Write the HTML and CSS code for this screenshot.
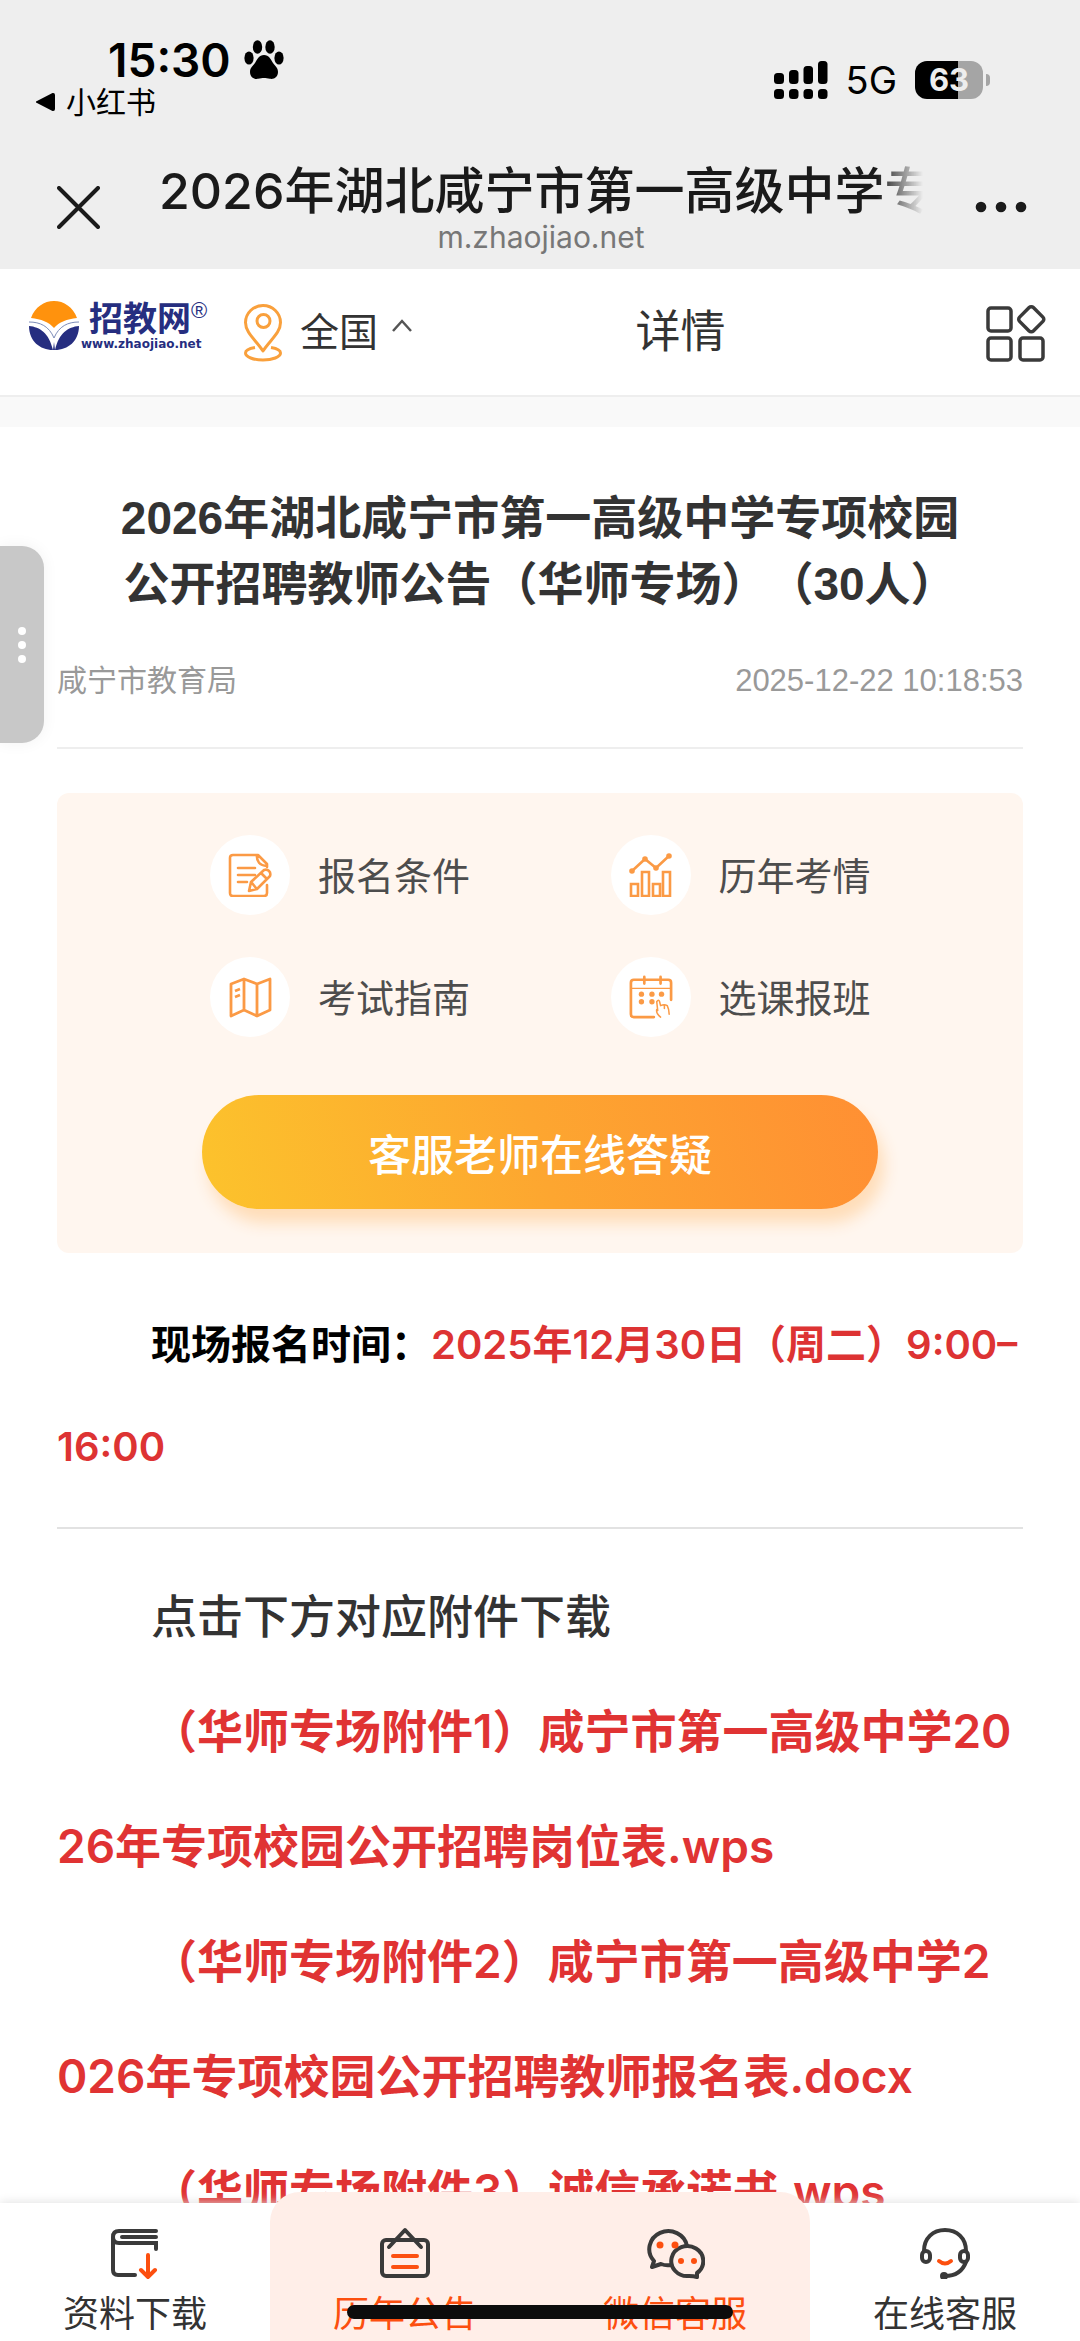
FILE: index.html
```html
<!DOCTYPE html>
<html lang="zh-CN">
<head>
<meta charset="utf-8">
<meta name="viewport" content="width=device-width, initial-scale=1">
<title>2026年湖北咸宁市第一高级中学专项校园公开招聘教师公告</title>
<link rel="stylesheet" href="styles.css">
</head>
<body>
<div class="chrome">
  <div class="status">
    <div class="status-left">
      <div class="clock">
        <span>15:30</span>
        <svg class="paw" viewBox="0 0 40 40" aria-hidden="true">
          <ellipse cx="5" cy="18" rx="4.6" ry="6.6"/><ellipse cx="13.500" cy="7" rx="4.700" ry="6.800"/>
          <ellipse cx="26" cy="7" rx="4.700" ry="6.800"/><ellipse cx="35" cy="18" rx="4.600" ry="6.600"/>
          <path d="M20 15c-5 0-6.500 4-9 8-2 3-5 4.500-5 9 0 5 4 7.500 8 6.800 2.500-.500 4-.800 6-.800s3.500.300 6 .800c4 .700 8-1.800 8-6.800 0-4.500-3-6-5-9-2.500-4-4-8-9-8z"/>
        </svg>
      </div>
      <a class="back-app" href="#">
        <svg viewBox="0 0 20 20" aria-hidden="true"><path d="M1 9.500 17.500 1q2.500-.500 2.500 2v14q0 2.500-2.500 2L1 10.500z"/></svg>
        <span>小红书</span>
      </a>
    </div>
    <div class="status-right">
      <svg class="signal" viewBox="0 0 54 38" aria-hidden="true">
        <rect x="0" y="12" width="10" height="11" rx="3.500"/><rect x="15" y="9" width="9.500" height="14" rx="3.500"/>
        <rect x="29.500" y="5" width="9.500" height="18" rx="3.500"/><rect x="44" y="0" width="9.500" height="23" rx="3.500"/>
        <rect x="0" y="28" width="10" height="10" rx="3.500"/><rect x="15" y="28" width="9.500" height="10" rx="3.500"/>
        <rect x="29.500" y="28" width="9.500" height="10" rx="3.500"/><rect x="44" y="28" width="9.500" height="10" rx="3.500"/>
      </svg>
      <span class="network">5G</span>
      <span class="battery"><span class="battery-cell">63</span><span class="battery-tip"></span></span>
    </div>
  </div>
  <div class="navbar">
    <button class="icon-button close" type="button" aria-label="关闭">
      <svg viewBox="0 0 43 43"><path d="M2 2l39 39M41 2 2 41" fill="none" stroke="#1a1a1a" stroke-width="4" stroke-linecap="round"/></svg>
    </button>
    <div class="nav-text">
      <div class="nav-title">2026年湖北咸宁市第一高级中学专</div>
      <div class="nav-domain">m.zhaojiao.net</div>
    </div>
    <button class="icon-button more" type="button" aria-label="更多">
      <svg viewBox="0 0 52 12"><circle cx="6" cy="6" r="5.300"/><circle cx="26" cy="6" r="5.300"/><circle cx="46" cy="6" r="5.300"/></svg>
    </button>
  </div>
</div>

<header class="site-header">
  <div class="brand">
    <a class="logo" href="#">
      <svg class="logo-mark" viewBox="0 0 50 50" aria-hidden="true">
        <path d="M2 17C6 6 15 0 25 0s19 6 23 17c-10 1-18 4-23 10C20 21 12 18 2 17z" fill="#ff920d"/>
        <path d="M0 25c11 1 20 7 24 24C11 49 0 40 0 25zM50 25c-11 1-20 7-24 24 13 0 24-9 24-24z" fill="#262e80"/>
        <path d="M0 21c11 0 20 4 25 16 5-12 14-16 25-16" fill="none" stroke="#7c8cb8" stroke-width="1"/>
        <path d="M24 49h2l-1-8z" fill="#262e80"/>
      </svg>
      <span class="logo-text">
        <span class="logo-name">招教网<span class="logo-reg">®</span></span>
        <span class="logo-url">www.zhaojiao.net</span>
      </span>
    </a>
    <button class="region" type="button">
      <svg class="pin" viewBox="0 0 38 58" fill="none" stroke="#f9a03c" stroke-width="3" aria-hidden="true">
        <path d="M19 47C12 36 1.500 29 1.500 18.500a17.500 17 0 0 1 35 0C36.500 29 26 36 19 47z" stroke-linejoin="round"/>
        <circle cx="19.500" cy="17" r="6.500"/>
        <path d="M11 43.500c-6 1-9.500 3-9.500 5.500 0 4 8 7 17.500 7s17.500-3 17.500-7c0-2.500-3.500-4.500-9.500-5.500"/>
      </svg>
      <span>全国</span>
      <svg class="caret" viewBox="0 0 20 13" fill="none" stroke="#555" stroke-width="2.500" aria-hidden="true"><path d="M1 12 10 2l9 10"/></svg>
    </button>
  </div>
  <div class="page-name">详情</div>
  <button class="icon-button apps" type="button" aria-label="栏目">
    <svg viewBox="0 0 60 58" fill="none" stroke="#3a3a3a" stroke-width="3.500">
      <rect x="2" y="4" width="23" height="23" rx="3"/><rect x="2" y="34" width="23" height="22" rx="3"/>
      <rect x="34" y="34" width="23" height="22" rx="3"/>
      <rect x="35.500" y="5.500" width="19.500" height="19.500" rx="3" transform="rotate(45 45.250 15.250)"/>
    </svg>
  </button>
</header>

<main class="article">
  <h1>2026年湖北咸宁市第一高级中学专项校园<br>公开招聘教师公告（华师专场）（30人）</h1>
  <div class="meta"><span>咸宁市教育局</span><time datetime="2025-12-22T10:18:53">2025-12-22 10:18:53</time></div>

  <section class="card">
    <div class="links">
      <a href="#">
        <span class="disc"><svg viewBox="0 0 44 44" fill="none" stroke="#fb9a45" stroke-width="2.600" stroke-linecap="round" stroke-linejoin="round">
          <path d="M39 32v8q0 3-3 3H5q-3 0-3-3V5q0-3 3-3h25l9 9v3M29 2q-1 10 10 11M10 15h17M10 22h17M10 29h9"/>
          <path d="M21 38l2-9 13-12q3-1 5 1t1 5L29 36zM24 30l4 5M33 20l5 5"/></svg></span>
        <span class="label">报名条件</span>
      </a>
      <a href="#">
        <span class="disc"><svg viewBox="0 0 44 44" fill="none" stroke="#fb9a45" stroke-width="2.600">
          <path d="M3 18 16 6l11 9L41 2"/>
          <g fill="#fb9a45"><circle cx="3" cy="18" r="1.500"/><circle cx="16" cy="6" r="1.500"/><circle cx="27" cy="15" r="1.500"/><circle cx="40" cy="3" r="1.500"/></g>
          <path d="M2 31h7v12H2zM13 19h7v24h-7zM24 31h7v12h-7zM34 19h7v24h-7z"/></svg></span>
        <span class="label">历年考情</span>
      </a>
      <a href="#">
        <span class="disc"><svg viewBox="0 0 44 44" fill="none" stroke="#fb9a45" stroke-width="2.800" stroke-linejoin="round">
          <path d="M3 9 16 4l13 5 13-5v31l-13 6-13-6-13 6zM16 4v31M29 9v32M7 16l5-2M7 22l5-2"/></svg></span>
        <span class="label">考试指南</span>
      </a>
      <a href="#">
        <span class="disc"><svg viewBox="0 0 46 46" fill="none" stroke="#fb9a45" stroke-width="2.800" stroke-linecap="round" stroke-linejoin="round">
          <path d="M44 26V8q0-3-3-3H5Q2 5 2 8v33q0 3 3 3h21"/><path d="M16 2v7M33 2v7"/><path d="M3 14h41" stroke-width="1.400"/>
          <g fill="#fb9a45" stroke="none"><circle cx="13" cy="20" r="2.800"/><circle cx="24" cy="20" r="2.800"/><circle cx="34" cy="20" r="2.800"/><circle cx="13" cy="28" r="2.800"/><circle cx="24" cy="28" r="2.800"/></g>
          <path d="M33 44q-5-4-4-8l1 1-1-9q2-3 3 0l1 4q4-2 7 0 2 4 2 9M37 32v3" stroke-width="1.600"/></svg></span>
        <span class="label">选课报班</span>
      </a>
    </div>
    <button class="ask" type="button">客服老师在线答疑</button>
  </section>

  <p class="when">现场报名时间：<strong>2025年12月30日（周二）9:00–</strong><br><strong>16:00</strong></p>
  <hr>
  <p class="hint">点击下方对应附件下载</p>
  <p class="file"><a href="#">（华师专场附件1）咸宁市第一高级中学20<br>26年专项校园公开招聘岗位表.wps</a></p>
  <p class="file"><a href="#">（华师专场附件2）咸宁市第一高级中学2<br>026年专项校园公开招聘教师报名表.docx</a></p>
  <p class="file"><a href="#">（华师专场附件3）诚信承诺书.wps</a></p>
</main>

<nav class="tabs">
  <a class="tab" href="#">
    <svg viewBox="0 0 52 52" fill="none" stroke="#3a3a3a" stroke-width="4" stroke-linecap="round">
      <path d="M47 4H10Q4 4 4 10v33q0 5 5 5h17M47 10H13M4 10q0 6 6 6h37v6"/>
      <path d="M39 28v21M32 43l7 7 7-7" stroke="#fc4f0f"/></svg>
    <span>资料下载</span>
  </a>
  <a class="tab tab-hot" href="#">
    <svg viewBox="0 0 52 52" fill="none" stroke="#3a3a3a" stroke-width="4" stroke-linecap="round" stroke-linejoin="round">
      <rect x="3" y="13" width="46" height="36" rx="4"/><path d="M10 20 26 3l16 17"/>
      <path d="M14 29h24M14 40h24" stroke="#fc4f0f"/></svg>
    <span>历年公告</span>
  </a>
  <a class="tab tab-hot" href="#">
    <svg class="wide" viewBox="0 0 60 52" fill="none" stroke="#3a3a3a" stroke-width="4" stroke-linejoin="round">
      <path d="M42 19A19 18 0 1 0 9 34l-2 6 9-3q5 2 10 1"/>
      <path d="M52 46a16 15 0 1 0-8 3q5 0 8 1z"/>
      <g fill="#fc4f0f" stroke="none"><circle cx="15" cy="18" r="3.500"/><circle cx="30" cy="18" r="3.500"/><circle cx="36" cy="34" r="3"/><circle cx="49" cy="34" r="3"/></g></svg>
    <span>微信客服</span>
  </a>
  <a class="tab" href="#">
    <svg viewBox="0 0 52 52" fill="none" stroke="#3a3a3a" stroke-width="4" stroke-linecap="round">
      <path d="M5 24C5 11 14 3 26 3s21 8 21 21M47 35c-3 8-10 14-21 14"/><circle cx="25" cy="49" r="2"/>
      <rect x="3" y="24" width="8" height="11" rx="4"/><rect x="41" y="24" width="8" height="11" rx="4"/>
      <path d="M20 34q6 5 12 0" stroke="#fc4f0f"/></svg>
    <span>在线客服</span>
  </a>
</nav>
<button class="side-handle" type="button" aria-label="展开侧栏"><i></i><i></i><i></i></button>
<div class="home-indicator"></div>
</body>
</html>
```
FILE: styles.css
```css
* { box-sizing: border-box; }

body {
  margin: 0;
  height: 100vh;
  display: flex;
  flex-direction: column;
  position: relative;
  overflow: hidden;
  background: #fff;
  color: #333;
  font-family: "Liberation Sans", "Noto Sans CJK SC", sans-serif;
  text-spacing-trim: space-all;
}

a { color: inherit; text-decoration: none; }
svg { display: block; }
p, h1 { margin: 0; }

button {
  padding: 0;
  border: 0;
  background: none;
  color: inherit;
  font: inherit;
}

/* Phone status bar and in-app browser bar */
.chrome { background: #eee; color: #000; }

.status {
  display: flex;
  justify-content: space-between;
  align-items: center;
  padding: 36px 90px 0 35px;
  font-family: Inter, "Noto Sans CJK SC", sans-serif;
}

.clock {
  display: flex;
  align-items: center;
  gap: 13px;
  padding-left: 73px;
  font-size: 46px;
  font-weight: 600;
  line-height: 48px;
}

.paw { width: 40px; height: 40px; }

.back-app {
  display: flex;
  align-items: center;
  gap: 11px;
  font-size: 30px;
  line-height: 36px;
}

.back-app svg { width: 20px; height: 20px; }

.status-right {
  display: flex;
  align-items: center;
  gap: 18px;
  padding-top: 4px;
}

.signal { width: 54px; height: 38px; }
.network { font-size: 38px; line-height: 38px; }
.battery { display: flex; align-items: center; gap: 3px; }

.battery-cell {
  width: 68px;
  border-radius: 12px;
  background: linear-gradient(90deg, #000 63%, #a5a5a5 63%);
  color: #eee;
  font-size: 31px;
  font-weight: 700;
  line-height: 38px;
  text-align: center;
}

.battery-tip {
  width: 4px;
  height: 12px;
  border-radius: 0 4px 4px 0;
  background: #a5a5a5;
}

.navbar {
  display: flex;
  align-items: center;
  padding: 41px 53px 16px 57px;
  color: #1a1a1a;
}

.close svg { width: 43px; height: 43px; }
.more svg { width: 52px; height: 12px; fill: #1a1a1a; }

.nav-text {
  flex: 1;
  min-width: 0;
  margin: 0 52px 0 59px;
  text-align: center;
}

.nav-title {
  overflow: hidden;
  font-family: Inter, "Noto Sans CJK SC", sans-serif;
  font-size: 50px;
  font-weight: 500;
  line-height: 60px;
  text-align: left;
  white-space: nowrap;
  -webkit-mask-image: linear-gradient(90deg, #000 94%, transparent);
  mask-image: linear-gradient(90deg, #000 94%, transparent);
}

.nav-domain {
  color: #777;
  font-family: Inter, sans-serif;
  font-size: 30px;
  line-height: 32px;
}

/* Site header */
.site-header {
  display: flex;
  align-items: center;
  height: 158px;
  padding: 0 34px 0 29px;
  border-bottom: 30px solid #f9f9f9;
  box-shadow: inset 0 -2px #eee;
}

.brand { display: flex; align-items: center; gap: 35px; }

.logo {
  display: flex;
  align-items: center;
  gap: 2px;
  padding-bottom: 14px;
  color: #262e80;
}

.logo-mark { width: 50px; height: 50px; }
.logo-text { display: flex; flex-direction: column; width: 128px; }

.logo-name {
  display: flex;
  padding-left: 8px;
  font-size: 34px;
  font-weight: 700;
  line-height: 36px;
}

.logo-reg { font-size: 22px; font-weight: 400; line-height: 20px; }

.logo-url {
  font-family: "DejaVu Sans", sans-serif;
  font-size: 12px;
  font-weight: 700;
  line-height: 14px;
}

.region {
  display: flex;
  align-items: center;
  gap: 14px;
  font-size: 39px;
  line-height: 56px;
}

.region span { padding-left: 4px; }
.pin { width: 38px; height: 58px; }
.caret { width: 20px; height: 13px; margin-bottom: 16px; }
.page-name { flex: 1; font-size: 45px; line-height: 64px; text-align: center; }
.apps { padding-left: 37px; }
.apps svg { width: 60px; height: 58px; }

/* Article */
.article {
  flex: 1;
  min-height: 0;
  overflow: hidden;
  padding: 58px 57px 0;
}

h1 { font-size: 46px; line-height: 66px; text-align: center; white-space: nowrap; }

.meta {
  display: flex;
  justify-content: space-between;
  margin-top: 44px;
  padding-bottom: 46px;
  border-bottom: 2px solid #eee;
  color: #999;
  font-size: 30px;
  line-height: 40px;
}

.meta time { font-size: 31px; }

.card {
  margin-top: 44px;
  padding: 42px 0 44px;
  border-radius: 12px;
  background: #fff6ef;
}

.links {
  display: grid;
  grid-template-columns: 1fr 1fr;
  row-gap: 42px;
  padding: 0 12px 0 153px;
  color: #4d4d4d;
  font-size: 38px;
}

.links a { display: flex; align-items: center; gap: 28px; }
.label { padding-bottom: 4px; }

.disc {
  display: grid;
  place-items: center;
  width: 80px;
  height: 80px;
  border-radius: 50%;
  background: #fff;
}

.disc svg { width: 44px; height: 44px; }

.ask {
  display: block;
  width: 70%;
  margin: 58px auto 0;
  padding-top: 8px;
  border-radius: 57px;
  background: linear-gradient(75deg, #fcc32c, #fda630 50%, #ff8f33);
  box-shadow: 6px 14px 16px #ffddb8;
  color: #fff;
  font-size: 43px;
  font-weight: 500;
  line-height: 106px;
}

.when, .hint, .file {
  font-family: Inter, "Noto Sans CJK SC", sans-serif;
  text-indent: 94px;
  white-space: nowrap;
}

.when {
  margin-top: 41px;
  color: #000;
  font-size: 40px;
  font-weight: 600;
  line-height: 102px;
}

.when strong { color: #dd3333; font-weight: 600; }

hr { margin: 29px 0 30px; border: 0; border-top: 2px solid #e2e2e2; }

.hint, .file { font-size: 46px; font-weight: 500; line-height: 115px; }
.file { color: #e03333; font-weight: 600; }

/* Bottom tabs */
.tabs {
  display: grid;
  grid-template-columns: repeat(4, 1fr);
  height: 138px;
  position: relative;
  background: #fff;
  box-shadow: 0 0 10px #ddd;
}

.tab {
  display: flex;
  flex-direction: column;
  align-items: center;
  gap: 9px;
  padding-top: 24px;
  font-size: 36px;
  line-height: 54px;
}

.tab svg { width: 52px; height: 52px; }
.tab svg.wide { width: 60px; }

.tab-hot {
  margin-top: -11px;
  padding-top: 35px;
  border-top-left-radius: 30px;
  background: #ffeee8;
  color: #fc4f0f;
}

.tab-hot + .tab-hot { border-radius: 0 30px 0 0; }

/* Overlays */
.side-handle {
  position: absolute;
  top: 546px;
  left: 0;
  display: flex;
  flex-direction: column;
  align-items: center;
  justify-content: center;
  gap: 6px;
  width: 44px;
  height: 197px;
  border-radius: 0 22px 22px 0;
  background: #c8c8c8;
  box-shadow: 0 0 16px #f2f2f2;
}

.side-handle i { width: 8px; height: 8px; border-radius: 50%; background: #fff; }

.home-indicator {
  position: absolute;
  bottom: 22px;
  left: 50%;
  width: 386px;
  height: 14px;
  margin-left: -193px;
  border-radius: 7px;
  background: #0c0c0c;
}
```
